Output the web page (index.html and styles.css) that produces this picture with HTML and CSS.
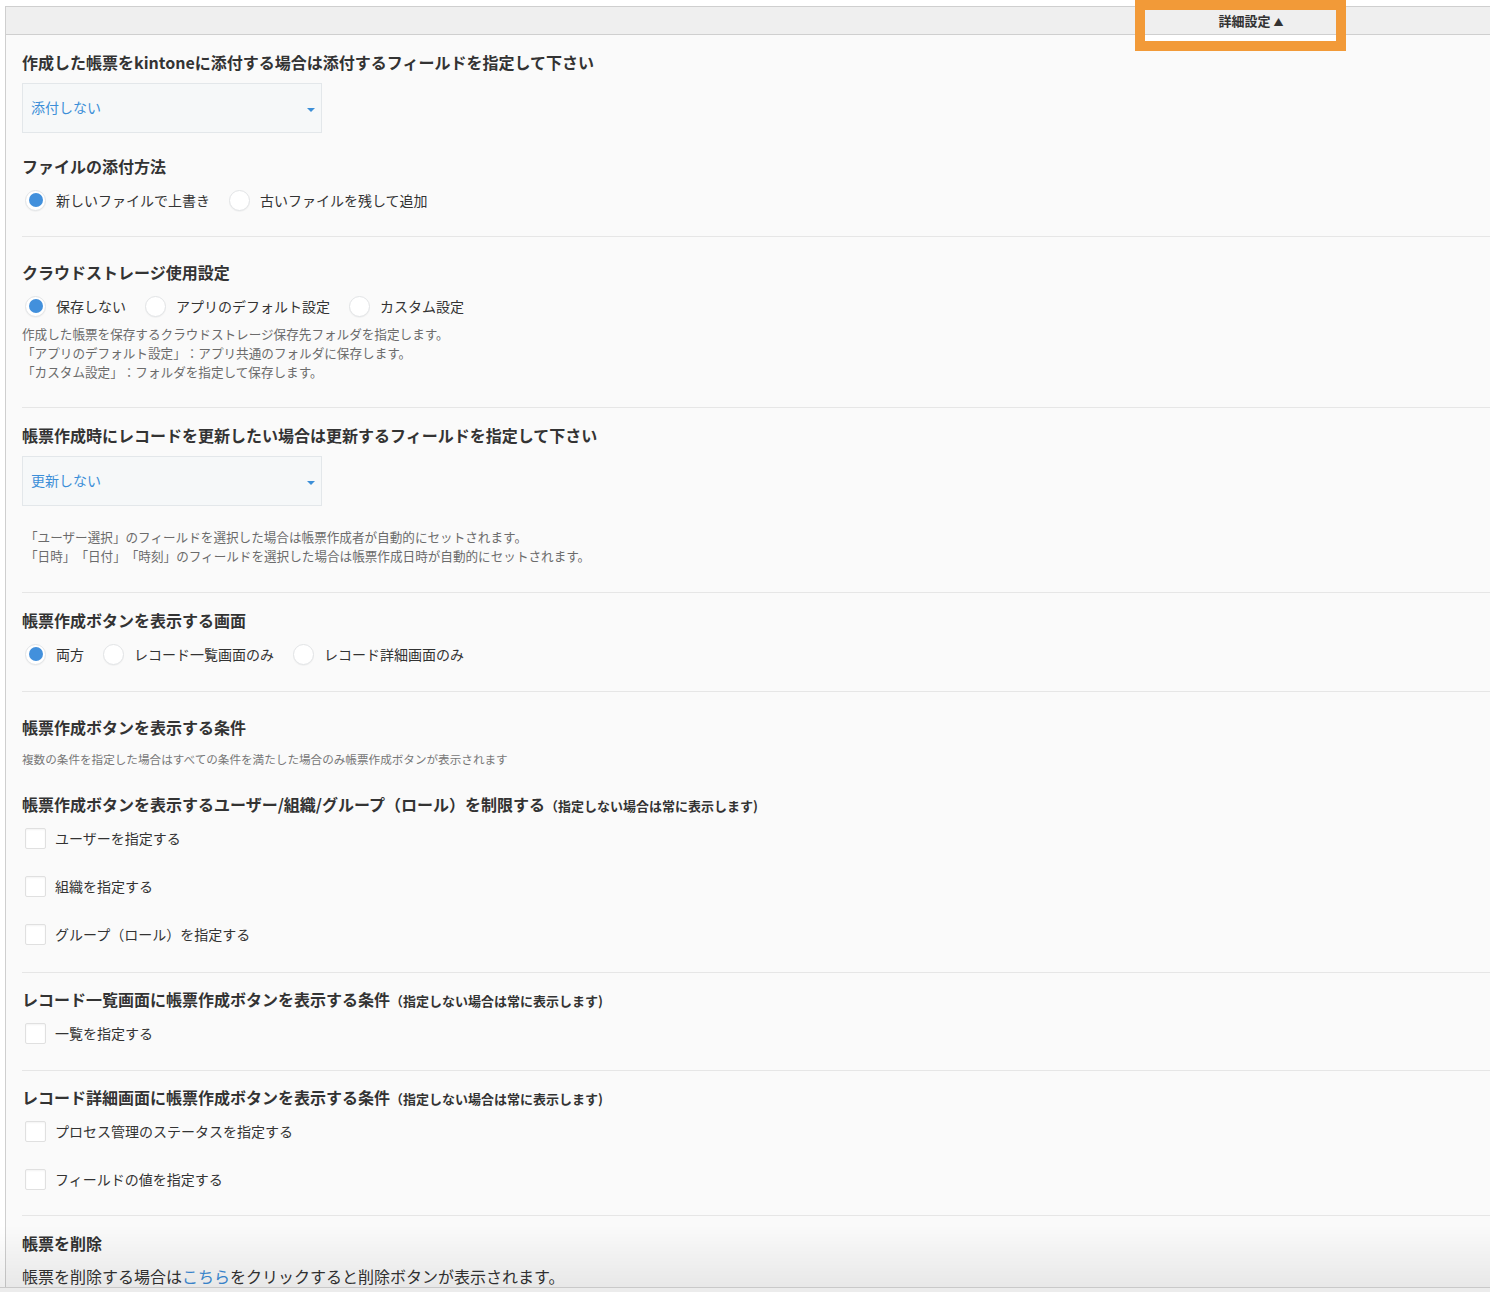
FILE: index.html
```html
<!DOCTYPE html>
<html lang="ja">
<head>
    <meta charset="UTF-8">
    <meta name="viewport" content="width=device-width, initial-scale=1.0">
    <title>詳細設定</title>
    <link rel="stylesheet" href="styles.css">
</head>
<body>

    <div class="panel">
        <div class="panel-head">
            <span class="toggle">詳細設定 <em>▲</em></span>
        </div>

        <div class="panel-body">
            <!-- 添付フィールド -->
            <section class="block first">
                <h3>作成した帳票をkintoneに添付する場合は添付するフィールドを指定して下さい</h3>
                <div class="select"><span>添付しない</span><i class="caret"></i></div>

                <h3 class="sub">ファイルの添付方法</h3>
                <div class="radios">
                    <label class="radio"><span class="dot on"></span>新しいファイルで上書き</label>
                    <label class="radio"><span class="dot"></span>古いファイルを残して追加</label>
                </div>
            </section>

            <!-- クラウドストレージ -->
            <section class="block spaced">
                <h3>クラウドストレージ使用設定</h3>
                <div class="radios">
                    <label class="radio"><span class="dot on"></span>保存しない</label>
                    <label class="radio"><span class="dot"></span>アプリのデフォルト設定</label>
                    <label class="radio"><span class="dot"></span>カスタム設定</label>
                </div>
                <p class="help">
                    作成した帳票を保存するクラウドストレージ保存先フォルダを指定します。<br>
                    「アプリのデフォルト設定」：アプリ共通のフォルダに保存します。<br>
                    「カスタム設定」：フォルダを指定して保存します。
                </p>
            </section>

            <!-- 更新フィールド -->
            <section class="block wide">
                <h3>帳票作成時にレコードを更新したい場合は更新するフィールドを指定して下さい</h3>
                <div class="select"><span>更新しない</span><i class="caret"></i></div>
                <p class="help note">
                    「ユーザー選択」のフィールドを選択した場合は帳票作成者が自動的にセットされます。<br>
                    「日時」「日付」「時刻」のフィールドを選択した場合は帳票作成日時が自動的にセットされます。
                </p>
            </section>

            <!-- 表示画面 -->
            <section class="block">
                <h3>帳票作成ボタンを表示する画面</h3>
                <div class="radios">
                    <label class="radio"><span class="dot on"></span>両方</label>
                    <label class="radio"><span class="dot"></span>レコード一覧画面のみ</label>
                    <label class="radio"><span class="dot"></span>レコード詳細画面のみ</label>
                </div>
            </section>

            <!-- 表示条件 -->
            <section class="block spaced wide">
                <h3>帳票作成ボタンを表示する条件</h3>
                <p class="small">複数の条件を指定した場合はすべての条件を満たした場合のみ帳票作成ボタンが表示されます</p>

                <h3 class="sub2">帳票作成ボタンを表示するユーザー/組織/グループ（ロール）を制限する<small>（指定しない場合は常に表示します)</small></h3>
                <div class="checks">
                    <label class="check"><span class="box"></span>ユーザーを指定する</label>
                    <label class="check"><span class="box"></span>組織を指定する</label>
                    <label class="check"><span class="box"></span>グループ（ロール）を指定する</label>
                </div>
            </section>

            <section class="block tight">
                <h3>レコード一覧画面に帳票作成ボタンを表示する条件<small>（指定しない場合は常に表示します)</small></h3>
                <div class="checks">
                    <label class="check"><span class="box"></span>一覧を指定する</label>
                </div>
            </section>

            <section class="block tight short">
                <h3>レコード詳細画面に帳票作成ボタンを表示する条件<small>（指定しない場合は常に表示します)</small></h3>
                <div class="checks">
                    <label class="check"><span class="box"></span>プロセス管理のステータスを指定する</label>
                    <label class="check"><span class="box"></span>フィールドの値を指定する</label>
                </div>
            </section>

            <!-- 削除 -->
            <section class="block">
                <h3>帳票を削除</h3>
                <p class="remove">帳票を削除する場合は<a href="#">こちら</a>をクリックすると削除ボタンが表示されます。</p>
            </section>
        </div>
    </div>

    <div class="highlight"></div>
    <div class="shade"></div>
    <div class="bottom-bar"></div>

</body>
</html>
```

FILE: styles.css
```css
body { margin: 0; background: #fff; color: #333; font-family: "Noto Sans CJK JP", "Noto Sans", sans-serif; text-spacing-trim: space-all; overflow: hidden; }

.panel { margin: 6px 0 0 5px; border-left: 1px solid #cfcfcf; border-top: 1px solid #cfcfcf; background: #fafafa; min-height: 1400px; }
.panel-head { height: 27px; background: #efefef; border-bottom: 1px solid #cfcfcf; display: flex; justify-content: flex-end; align-items: center; }
.toggle { width: 160px; margin-right: 159px; text-align: center; font-size: 13px; font-weight: bold; color: #333; }
.toggle em { font-style: normal; font-size: 10px; }

.panel-body { padding-left: 16px; }

.block { padding: 15px 0 26px; border-top: 1px solid #e6e6e6; }
.block.first { padding-top: 15px; padding-bottom: 25px; border-top: none; }
.block.spaced { padding-top: 23px; }
.block.tight { padding-top: 14px; }
.block.wide { padding-bottom: 27px; }
.block.short { padding-bottom: 25px; }

h3 { margin: 0; font-size: 16px; line-height: 24px; font-weight: bold; color: #333; }
h3 small { font-size: 13px; font-weight: bold; }
h3.sub { margin-top: 21px; }
h3.sub2 { margin-top: 25px; }

.select { position: relative; box-sizing: border-box; width: 300px; height: 50px; margin-top: 9px; border: 1px solid #e3e7ea; background: #f6f8f9; display: flex; align-items: center; padding-left: 8px; }
.select span { font-size: 14px; color: #3c8fd8; margin-top: -2px; }
.caret { position: absolute; right: 6px; top: 24px; width: 0; height: 0; border-left: 4px solid transparent; border-right: 4px solid transparent; border-top: 4px solid #3c8fd8; }

.radios { display: flex; margin-top: 11px; height: 22px; align-items: center; }
.radio { display: flex; align-items: center; font-size: 14px; margin-right: 16px; }
.dot { width: 19px; height: 19px; margin: 0 10px 0 3px; border: 1px solid #e2e4e6; border-radius: 50%; background: #fff; display: flex; align-items: center; justify-content: center; box-shadow: 0 1px 1px rgba(0,0,0,0.04); }
.dot.on::after { content: ""; width: 14px; height: 14px; border-radius: 50%; background: #4290dc; }

.help { margin: 7px 0 0; font-size: 12.6px; line-height: 19px; color: #6b6b6b; }
.help.note { margin-top: 21px; padding-left: 3px; }
.small { margin: 12px 0 0; font-size: 11.6px; line-height: 16px; color: #777; }

.checks { margin-top: 9px; display: flex; flex-direction: column; gap: 26px; }
.check { display: flex; align-items: center; height: 22px; font-size: 14px; }
.box { width: 19px; height: 19px; margin: 0 9px 0 3px; border: 1px solid #e0e0e0; border-radius: 2px; background: #fff; box-shadow: inset 0 1px 2px rgba(0,0,0,0.05); }

.remove { margin: 9px 0 0; font-size: 16px; line-height: 24px; }
.remove a { color: #3b8bd6; text-decoration: none; }

.highlight { position: absolute; left: 1135px; top: 0; width: 191px; height: 31px; border: 10px solid #f29a38; background: linear-gradient(to bottom, transparent 25px, #fff 25px); }
.shade { position: fixed; left: 0; right: 0; bottom: 5px; height: 62px; background: linear-gradient(to bottom, rgba(0,0,0,0), rgba(0,0,0,0.07)); pointer-events: none; }
.bottom-bar { position: fixed; left: 0; right: 0; bottom: 0; height: 4px; border-top: 1px solid #c9c9c9; background: #ececec; }
```
